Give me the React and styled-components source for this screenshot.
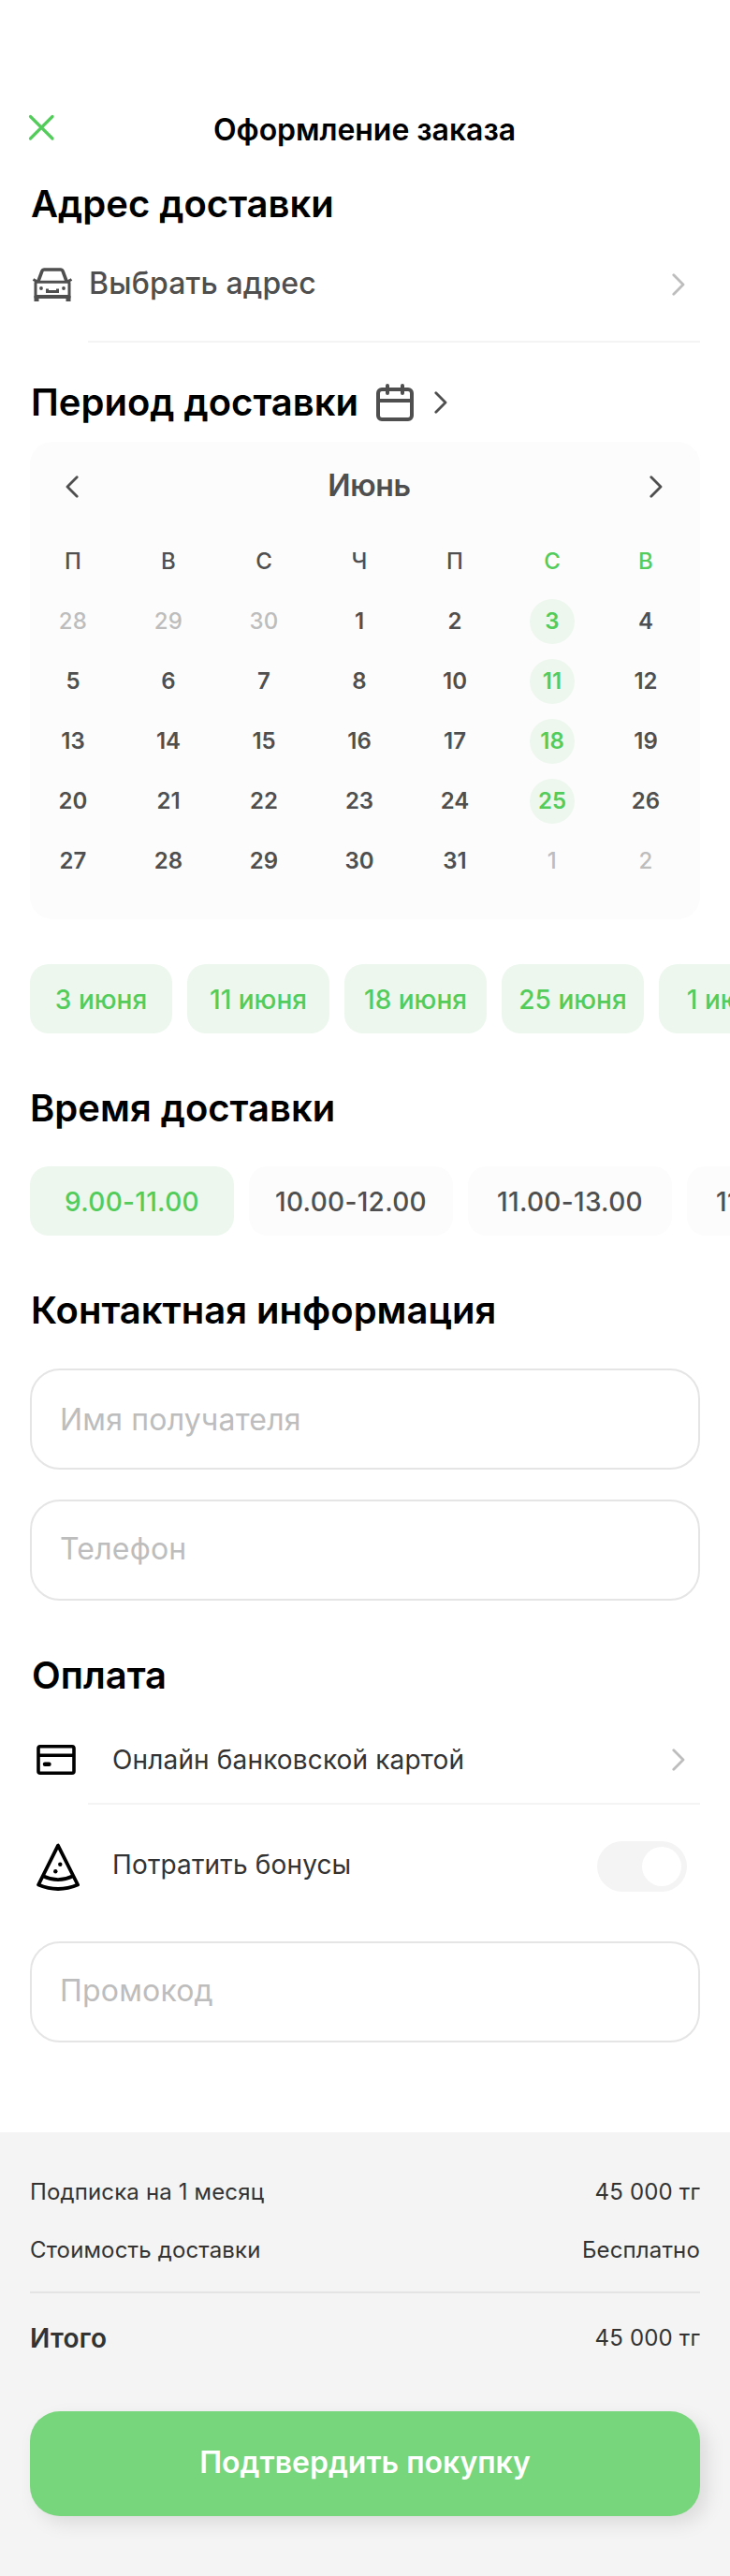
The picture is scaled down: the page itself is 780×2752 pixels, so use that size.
import React from "react";
import styled, { createGlobalStyle } from "styled-components";

const color = {
  green: "#53cc5b",
  greenSoft: "#edf7ee",
  dark: "#4f4f4f",
  text: "#333333",
  muted: "#bdbdbd",
  line: "#f4f4f4",
  border: "#e5e5e5",
  surface: "#fcfcfc",
};

const GlobalStyle = createGlobalStyle`
  * { box-sizing: border-box; }
  body {
    margin: 0;
    background: #ffffff;
    font-family: Inter, "Liberation Sans", sans-serif;
  }
  button, input { font: inherit; border: 0; padding: 0; margin: 0; background: none; }
`;

const Page = styled.main`
  width: 780px;
  min-height: 2752px;
  overflow: hidden;
  background: #ffffff;
`;

const Header = styled.header`
  display: grid;
  grid-template-columns: 64px 1fr 64px;
  height: 194px;
  padding: 118px 30px 0 29px;
`;

const CloseButton = styled.button`
  display: flex;
  width: 30px;
  height: 36px;
  align-items: center;
`;

const Title = styled.h1`
  margin: 1px 0 0;
  font-size: 32px;
  font-weight: 600;
  line-height: 40px;
  letter-spacing: -0.05px;
  text-align: center;
`;

const Section = styled.section`
  padding: 0 32px;
  margin-top: ${(p) => p.$gap || 0}px;
`;

const Heading = styled.h2`
  margin: 0;
  padding-left: ${(p) => p.$indent ?? 1}px;
  font-size: 40px;
  font-weight: 600;
  line-height: 48px;
  color: #000000;
  white-space: nowrap;
`;

const HeadingRow = styled.div`
  display: flex;
  align-items: center;
  ${Heading} { width: 370px; }
`;

const CalendarSlot = styled.span`
  display: flex;
  margin-right: 22px;
`;

const AddressRow = styled.div`
  display: flex;
  align-items: center;
  height: 84px;
  padding: 40px 16px 0 2px;
`;

const AddressLabel = styled.span`
  flex: 1;
  margin: 0 0 2px 17px;
  font-size: 32px;
  font-weight: 550;
  line-height: 40px;
  letter-spacing: 0.15px;
  color: ${color.dark};
`;

const Divider = styled.div`
  height: 2px;
  margin: ${(p) => p.$top || 0}px 0 0 62px;
  background: ${color.line};
`;

const CalendarCard = styled.div`
  height: 510px;
  margin-top: 18px;
  padding: 24px 22px 0;
  border-radius: 24px;
  background: ${color.surface};
`;

const MonthBar = styled.div`
  display: flex;
  align-items: center;
  justify-content: space-between;
  height: 48px;
  padding: 0 18px 0 16px;
`;

const MonthName = styled.span`
  margin: 0 0 3px 11px;
  font-size: 32px;
  font-weight: 600;
  line-height: 40px;
  letter-spacing: -0.3px;
  color: ${color.dark};
`;

const DayGrid = styled.div`
  display: grid;
  grid-template-columns: repeat(7, 48px);
  column-gap: 54px;
  row-gap: 16px;
  margin-top: 32px;
`;

const dayColors = {
  weekday: color.dark,
  weekend: color.green,
  outside: color.muted,
  picked: color.green,
  regular: color.dark,
};

const Day = styled.div`
  width: 48px;
  height: 48px;
  border-radius: 50%;
  font-size: 24px;
  line-height: 48px;
  text-align: center;
  font-weight: ${(p) => (p.$kind === "regular" || p.$kind === "picked" ? 600 : 550)};
  letter-spacing: ${(p) => (p.$kind === "outside" ? 0.3 : 0)}px;
  color: ${(p) => dayColors[p.$kind]};
  background: ${(p) => (p.$kind === "picked" ? color.greenSoft : "transparent")};
  &:nth-child(7n + 6) { margin-left: 2px; }
`;

const ChipRow = styled.div`
  display: flex;
  gap: 16px;
  margin-top: ${(p) => p.$gap}px;
  padding-left: 32px;
  overflow: hidden;
`;

const Chip = styled.button`
  flex: none;
  width: ${(p) => p.$width}px;
  height: 74px;
  padding-top: 2px;
  border-radius: 20px;
  font-size: 28px;
  font-weight: 550;
  line-height: 72px;
  letter-spacing: ${(p) => p.$tracking}px;
  text-align: center;
  white-space: nowrap;
  color: ${(p) => (p.$active ? color.green : color.dark)};
  background: ${(p) => (p.$active ? color.greenSoft : color.surface)};
`;

const Field = styled.input`
  display: block;
  width: 100%;
  height: 108px;
  margin-top: ${(p) => p.$gap}px;
  padding: 0 30px ${(p) => p.$lift || 0}px;
  border: 2px solid ${color.border};
  border-radius: 32px;
  font-size: 32px;
  letter-spacing: 0.2px;
  color: ${color.text};
  outline: none;
  &::placeholder { color: ${color.muted}; opacity: 1; }
`;

const PayRow = styled.div`
  display: flex;
  align-items: center;
  height: ${(p) => p.$height}px;
  margin-top: ${(p) => p.$gap || 0}px;
  padding: 0 ${(p) => p.$right}px 0 6px;
`;

const PayIcon = styled.span`
  display: flex;
  width: 82px;
`;

const PayLabel = styled.span`
  flex: 1;
  margin-bottom: ${(p) => p.$lift || 0}px;
  font-size: 28px;
  line-height: 34px;
  letter-spacing: 0.15px;
  color: ${color.text};
`;

const Toggle = styled.button`
  display: flex;
  justify-content: flex-end;
  align-items: center;
  width: 96px;
  height: 54px;
  margin-bottom: 1px;
  padding-right: 6px;
  border-radius: 27px;
  background: ${color.line};
`;

const Knob = styled.span`
  width: 42px;
  height: 42px;
  border-radius: 50%;
  background: #ffffff;
`;

const Summary = styled.footer`
  height: 474px;
  margin-top: 96px;
  padding: 48px 32px 0;
  background: #f4f4f4;
`;

const SummaryRow = styled.div`
  display: flex;
  align-items: center;
  justify-content: space-between;
  height: 32px;
  margin-top: ${(p) => p.$gap || 0}px;
  font-size: 24px;
  font-weight: 430;
  line-height: 32px;
  letter-spacing: 0.15px;
  color: ${color.text};
`;

const SummaryRule = styled.div`
  height: 2px;
  margin-top: 28px;
  background: #e4e4e4;
`;

const TotalLabel = styled.strong`
  font-size: 28px;
  font-weight: 600;
  letter-spacing: 0.25px;
`;

const ConfirmButton = styled.button`
  display: block;
  width: 100%;
  height: 112px;
  margin-top: 62px;
  padding-bottom: 2px;
  border-radius: 32px;
  font-size: 32px;
  font-weight: 600;
  line-height: 110px;
  color: #ffffff;
  background: #77d57b;
  box-shadow: 8px 8px 20px rgba(0, 0, 0, 0.1);
`;

function Chevron({ left, stroke = color.dark }) {
  return (
    <svg width="14" height="26" viewBox="0 0 14 26" fill="none" stroke={stroke} strokeWidth="2.800" strokeLinecap="round" strokeLinejoin="round">
      <path d={left ? "M12.200 2.800 2 13l10.200 10.200" : "M1.800 2.800 12 13 1.800 23.200"} />
    </svg>
  );
}

function CloseIcon() {
  return (
    <svg width="30" height="30" viewBox="0 0 30 30" fill="none" stroke={color.green} strokeWidth="3.200" strokeLinecap="round">
      <path d="M3.500 3.500l23.500 23.500M27 3.500L3.500 27" />
    </svg>
  );
}

function CarIcon() {
  return (
    <svg width="44" height="40" viewBox="0 0 44 40" fill="none" stroke={color.dark} strokeWidth="3.600">
      <path d="M6.500 17.500 11 5.500q.5-1.500 2-1.500h18q1.500 0 2 1.500l4.500 12" />
      <path d="M1.500 14.500l4.500 2.500M42.500 14.500L38 17" strokeWidth="3" />
      <path d="M4 18.500q0-1.300 1.500-1.300h33q1.500 0 1.500 1.300v14.500H4z" strokeWidth="3" />
      <path d="M3 33h38" strokeWidth="4" />
      <path d="M5 32v6M39 32v6" strokeWidth="5" />
      <path d="M16.500 24.500v3h11v-3" strokeWidth="3" />
      <circle cx="10" cy="24" r="1.900" fill={color.dark} stroke="none" />
      <circle cx="34" cy="24" r="1.900" fill={color.dark} stroke="none" />
    </svg>
  );
}

function CalendarIcon() {
  return (
    <svg width="40" height="40" viewBox="0 0 40 40" fill="none" stroke={color.dark} strokeWidth="4" strokeLinecap="round">
      <rect x="2" y="6" width="36" height="32" rx="4" />
      <path d="M2 18h36" />
      <path d="M12 2v8M28 2v8" />
    </svg>
  );
}

function CardIcon() {
  return (
    <svg width="44" height="34" viewBox="0 0 44 34" fill="none" stroke="#000000" strokeWidth="3.600">
      <rect x="3" y="2.700" width="38" height="28.600" rx="2" />
      <path d="M3 12.200h38" />
      <path d="M10 21.700h4.500" strokeWidth="4.400" strokeLinecap="round" />
    </svg>
  );
}

function PizzaIcon() {
  return (
    <svg width="48" height="52" viewBox="0 0 48 52" fill="none" stroke="#000000" strokeWidth="3.800" strokeLinejoin="round">
      <path d="M24 2.600 3.100 44.500Q24 53.500 45.100 44.500z" />
      <path d="M8 35.200Q24 43 40 35.200" />
      <circle cx="26.300" cy="22.800" r="2.200" fill="#000000" stroke="none" />
      <circle cx="21.300" cy="30.300" r="2.200" fill="#000000" stroke="none" />
    </svg>
  );
}

const weekdays = ["П", "В", "С", "Ч", "П", "С", "В"];
const days = [28, 29, 30, 1, 2, 3, 4, 5, 6, 7, 8, 10, 11, 12, 13, 14, 15, 16, 17, 18, 19, 20, 21, 22, 23, 24, 25, 26, 27, 28, 29, 30, 31, 1, 2];
const dates = ["3 июня", "11 июня", "18 июня", "25 июня", "1 июня"];
const slots = ["9.00-11.00", "10.00-12.00", "11.00-13.00", "11.00-13.00"];

function dayKind(index) {
  if (index < 3 || index > 32) return "outside";
  return index % 7 === 5 ? "picked" : "regular";
}

export default function App() {
  return (
    <Page>
      <GlobalStyle />
      <Header>
        <CloseButton aria-label="Закрыть"><CloseIcon /></CloseButton>
        <Title>Оформление заказа</Title>
      </Header>

      <Section>
        <Heading>Адрес доставки</Heading>
        <AddressRow>
          <CarIcon />
          <AddressLabel>Выбрать адрес</AddressLabel>
          <Chevron stroke={color.muted} />
        </AddressRow>
        <Divider $top={38} />
      </Section>

      <Section $gap={40}>
        <HeadingRow>
          <Heading>Период доставки</Heading>
          <CalendarSlot><CalendarIcon /></CalendarSlot>
          <Chevron />
        </HeadingRow>
        <CalendarCard>
          <MonthBar>
            <Chevron left />
            <MonthName>Июнь</MonthName>
            <Chevron />
          </MonthBar>
          <DayGrid>
            {weekdays.map((d, i) => <Day key={"w" + i} $kind={i > 4 ? "weekend" : "weekday"}>{d}</Day>)}
            {days.map((d, i) => <Day key={i} $kind={dayKind(i)}>{d}</Day>)}
          </DayGrid>
        </CalendarCard>
      </Section>
      <ChipRow $gap={48}>
        {dates.map((d) => <Chip key={d} $width={152} $tracking={0} $active>{d}</Chip>)}
      </ChipRow>

      <Section $gap={56}>
        <Heading $indent={0}>Время доставки</Heading>
      </Section>
      <ChipRow $gap={38}>
        {slots.map((s, i) => <Chip key={i} $width={218} $tracking={0.3} $active={i === 0}>{s}</Chip>)}
      </ChipRow>

      <Section $gap={56}>
        <Heading>Контактная информация</Heading>
        <Field $gap={38} placeholder="Имя получателя" />
        <Field $gap={32} $lift={4} placeholder="Телефон" />
      </Section>

      <Section $gap={56}>
        <Heading $indent={2}>Оплата</Heading>
        <PayRow $height={92} $gap={20} $right={16}>
          <PayIcon><CardIcon /></PayIcon>
          <PayLabel>Онлайн банковской картой</PayLabel>
          <Chevron stroke={color.muted} />
        </PayRow>
        <Divider />
        <PayRow $height={133} $right={14}>
          <PayIcon><PizzaIcon /></PayIcon>
          <PayLabel $lift={5}>Потратить бонусы</PayLabel>
          <Toggle role="switch" aria-checked="false" aria-label="Потратить бонусы"><Knob /></Toggle>
        </PayRow>
        <Field $gap={13} $lift={4} placeholder="Промокод" />
      </Section>

      <Summary>
        <SummaryRow><span>Подписка на 1 месяц</span><span>45 000 тг</span></SummaryRow>
        <SummaryRow $gap={30}><span>Стоимость доставки</span><span>Бесплатно</span></SummaryRow>
        <SummaryRule />
        <SummaryRow $gap={32}><TotalLabel>Итого</TotalLabel><span>45 000 тг</span></SummaryRow>
        <ConfirmButton>Подтвердить покупку</ConfirmButton>
      </Summary>
    </Page>
  );
}
